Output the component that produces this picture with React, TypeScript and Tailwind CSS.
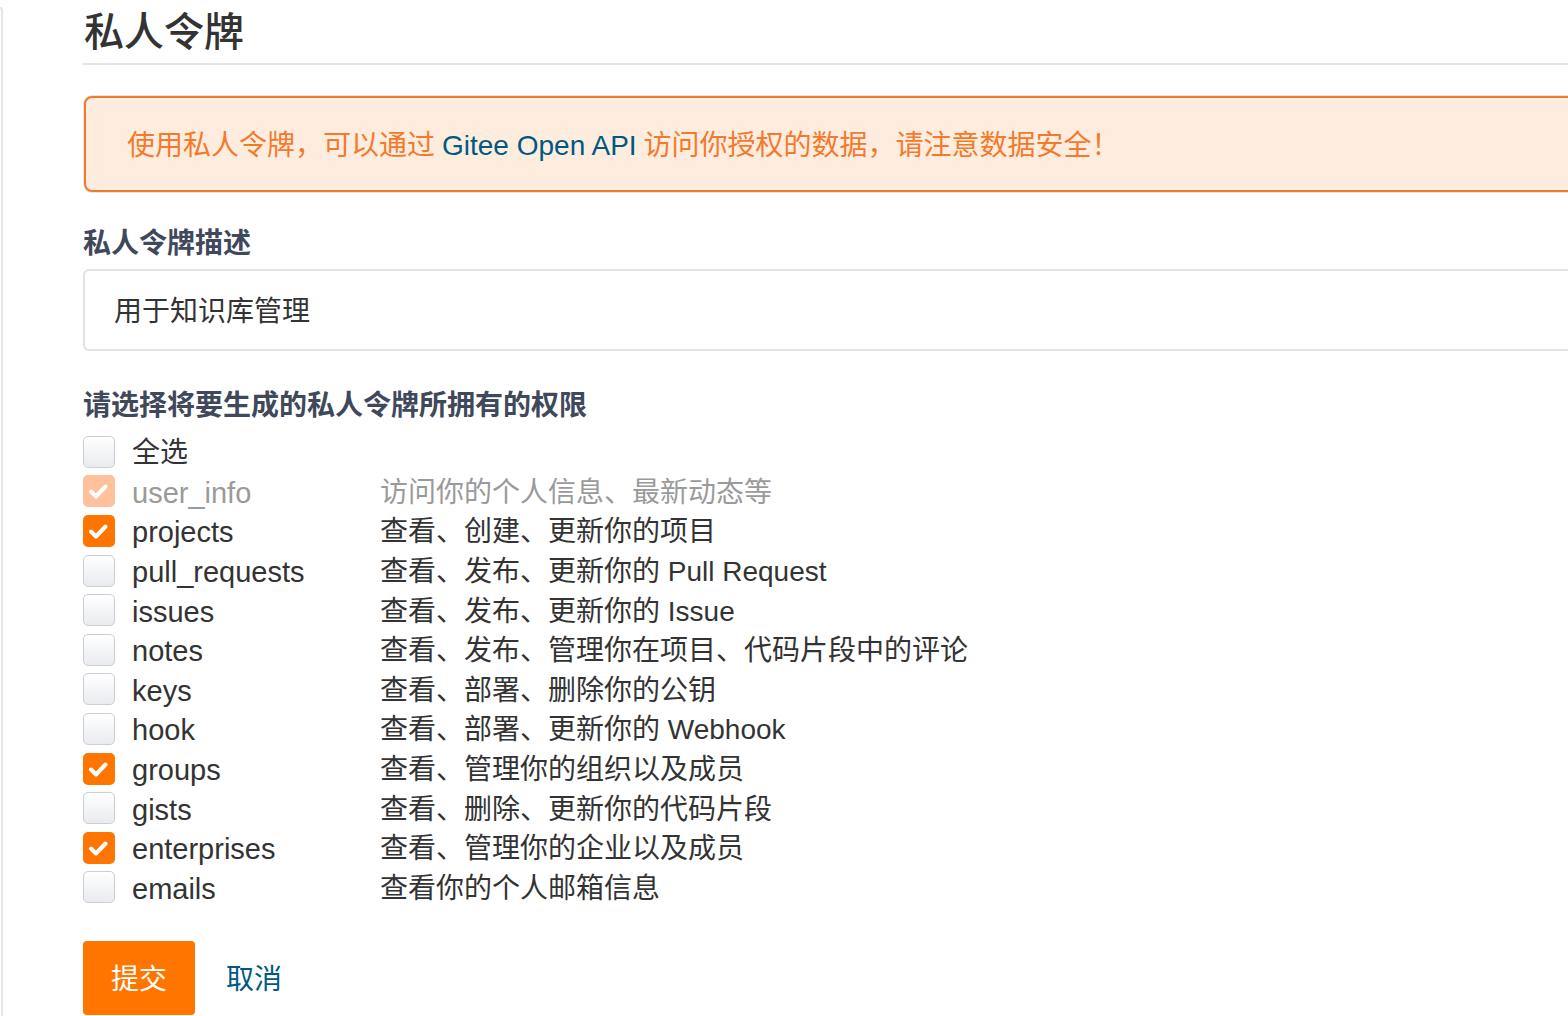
import React from "react";

type Perm = { name: string; desc: string; state?: "checked" | "disabled" };

const perms: Perm[] = [
  { name: "user_info", desc: "访问你的个人信息、最新动态等", state: "disabled" },
  { name: "projects", desc: "查看、创建、更新你的项目", state: "checked" },
  { name: "pull_requests", desc: "查看、发布、更新你的 Pull Request" },
  { name: "issues", desc: "查看、发布、更新你的 Issue" },
  { name: "notes", desc: "查看、发布、管理你在项目、代码片段中的评论" },
  { name: "keys", desc: "查看、部署、删除你的公钥" },
  { name: "hook", desc: "查看、部署、更新你的 Webhook" },
  { name: "groups", desc: "查看、管理你的组织以及成员", state: "checked" },
  { name: "gists", desc: "查看、删除、更新你的代码片段" },
  { name: "enterprises", desc: "查看、管理你的企业以及成员", state: "checked" },
  { name: "emails", desc: "查看你的个人邮箱信息" },
];

function Box({ state }: { state?: "checked" | "disabled" }) {
  if (!state) {
    return (
      <span className="w-[32px] h-[32px] shrink-0 rounded-[5px] border-[1.5px] border-[#cbced3] bg-gradient-to-b from-white to-[#e9ebef]" />
    );
  }
  return (
    <span
      className={
        "w-[32px] h-[32px] shrink-0 rounded-[5px] flex items-center justify-center " +
        (state === "checked" ? "bg-[#ff7500]" : "bg-[#ffc09c]")
      }
    >
      <svg width="32" height="32" viewBox="0 0 32 32" fill="none">
        <path d="M8 16.5 L13 21.5 L22.5 11.5" stroke="white" strokeWidth="4" strokeLinecap="round" strokeLinejoin="round" />
      </svg>
    </span>
  );
}

export default function App() {
  return (
    <div className="flex w-full h-[1016px] overflow-hidden bg-white font-['Liberation_Sans','Noto_Sans_CJK_SC',sans-serif] text-[#333]">
      <div className="w-[3px] shrink-0 mt-[7px] border-r-2 border-t-2 border-[#e3e6ea] rounded-tr-[4px]" />

      <div className="w-[1600px] shrink-0 ml-[80px] flex flex-col">
        <div className="h-[65px] border-b-2 border-[#e6e6e6]">
          <h1 className="pl-[1px] pt-[2px] text-[40px] leading-[60px] font-medium text-[#333]">私人令牌</h1>
        </div>

        <div className="mt-[31px] ml-[1px] h-[96px] flex items-center pl-[41px] pt-[4px] rounded-[8px] border-2 border-[#f37a2c] bg-[#feeddf] shadow-[0_0_0_1px_#e3e6ea] text-[28px] leading-[40px] text-[#f37a2c]">
          使用私人令牌，可以通过 <span className="text-[#005980] mx-[0.25em]">Gitee Open API</span> 访问你授权的数据，请注意数据安全！
        </div>

        <div className="mt-[32px] text-[28px] leading-[40px] font-semibold text-[#40485b]">私人令牌描述</div>

        <div className="mt-[5px] h-[82px] flex items-center pl-[29px] pt-[3px] rounded-[6px] border-2 border-[#dfe2e6] text-[28px] leading-[40px] text-[#333]">
          用于知识库管理
        </div>

        <div className="mt-[35px] text-[28px] leading-[40px] font-semibold text-[#40485b]">请选择将要生成的私人令牌所拥有的权限</div>

        <div className="mt-[6px] flex flex-col">
          <div className="h-[39.6px] flex items-center">
            <Box />
            <span className="ml-[17px] pt-[3px] text-[28px] leading-[36px]">全选</span>
          </div>
          {perms.map((p) => (
            <div key={p.name} className="h-[39.6px] flex items-center">
              <Box state={p.state} />
              <span
                className={
                  "ml-[17px] pt-[3px] w-[248px] text-[29px] leading-[36px] " +
                  (p.state === "disabled" ? "text-[#9a9a9a]" : "text-[#333]")
                }
              >
                {p.name}
              </span>
              <span className={"pt-[3px] text-[28px] leading-[36px] " + (p.state === "disabled" ? "text-[#9a9a9a]" : "text-[#333]")}>
                {p.desc}
              </span>
            </div>
          ))}
        </div>

        <div className="mt-[34px] flex items-center">
          <button className="w-[112px] h-[74px] pt-[4px] rounded-[4px] bg-[#ff7500] text-white text-[28px] leading-[40px]">提交</button>
          <span className="ml-[31px] pt-[4px] text-[28px] leading-[40px] text-[#005980]">取消</span>
        </div>
      </div>
    </div>
  );
}
